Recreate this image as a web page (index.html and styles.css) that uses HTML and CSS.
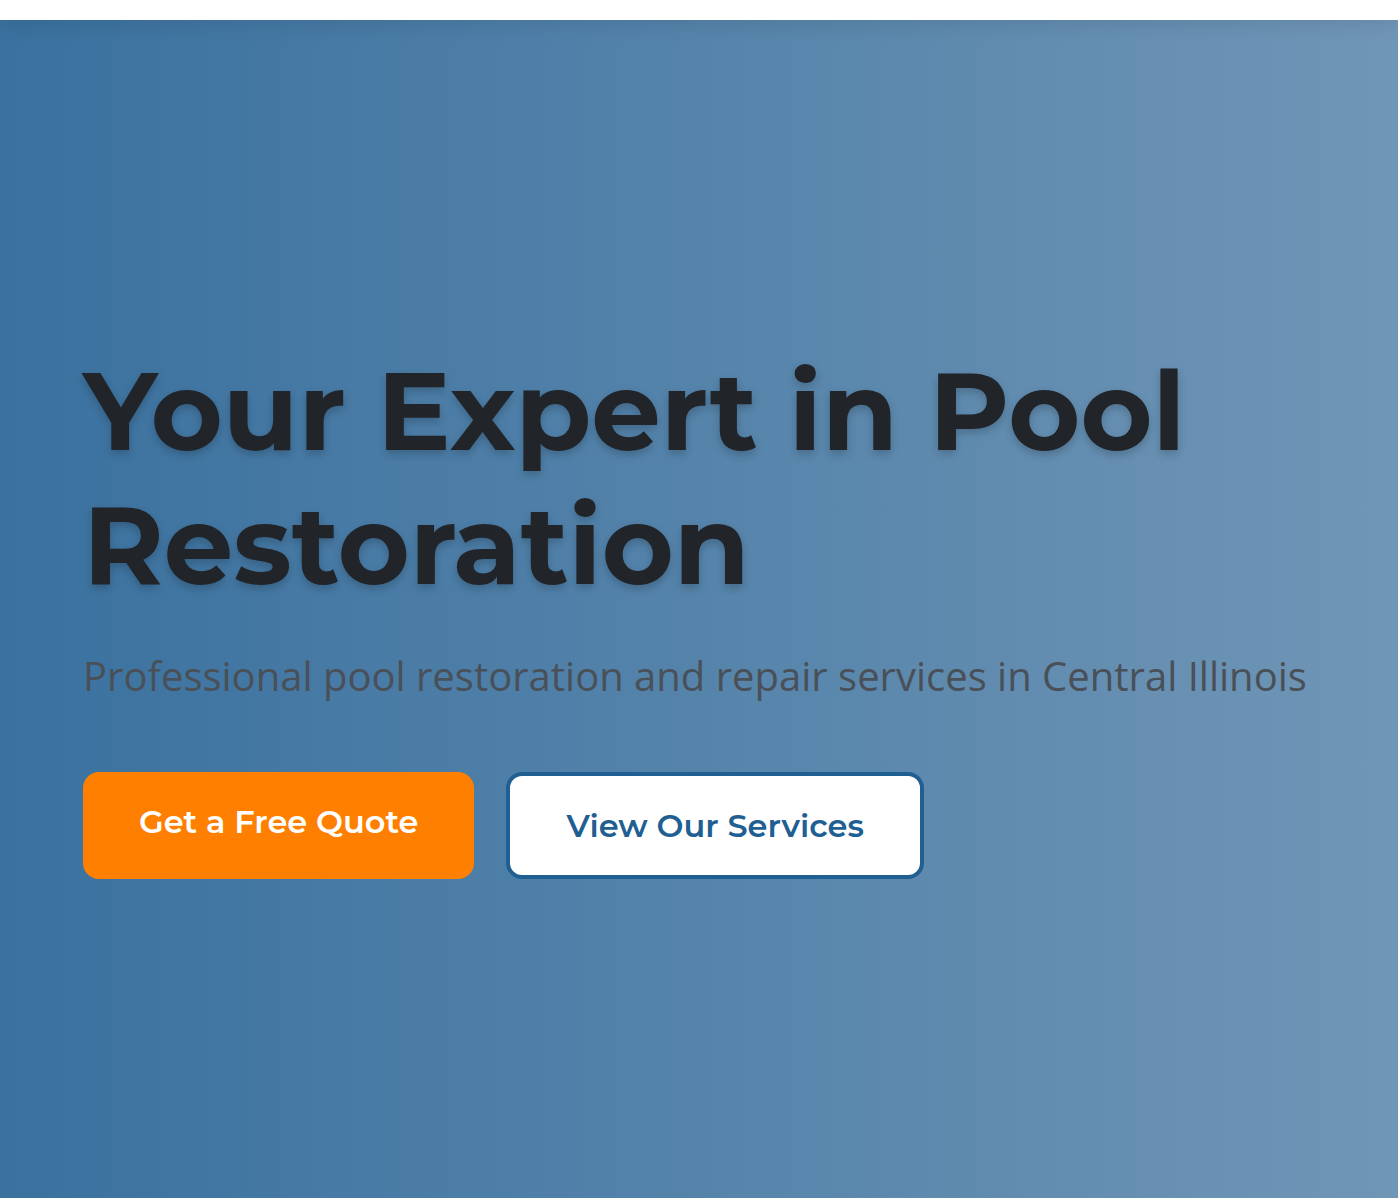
FILE: index.html
```html
<!DOCTYPE html>
<html lang="en">
<head>
<meta charset="utf-8">
<meta name="viewport" content="width=device-width, initial-scale=1">
<title>Pool Restoration</title>
<link rel="stylesheet" href="styles.css">
</head>
<body>
<header class="site-header"></header>
<main class="hero">
  <div class="hero-content">
    <h1 class="hero-title">Your Expert in Pool Restoration</h1>
    <p class="hero-lead">Professional pool restoration and repair services in Central Illinois</p>
    <div class="hero-actions">
      <a class="btn btn-primary" href="#quote">Get a Free Quote</a>
      <a class="btn btn-outline" href="#services">View Our Services</a>
    </div>
  </div>
</main>
</body>
</html>
```
FILE: styles.css
```css
* {
  box-sizing: border-box;
}

body {
  display: flex;
  flex-direction: column;
  min-height: 100vh;
  margin: 0;
  font-family: "Open Sans", "Noto Sans", sans-serif;
}

.site-header {
  position: relative;
  height: 20px;
  background: #fff;
  box-shadow: 0 4px 20px rgba(0, 0, 0, 0.1);
}

.hero {
  display: flex;
  flex: 1;
  align-items: center;
  padding: 36px 83px 32px;
  background: linear-gradient(90deg, #3a719f 0%, #7096b6 100%);
}

.hero-content {
  width: 100%;
}

.hero-title {
  margin: 0 0 32px;
  color: #212529;
  font-family: Montserrat, "Open Sans", sans-serif;
  font-size: 110px;
  font-weight: 700;
  line-height: 134px;
  text-shadow: 0 4px 8px rgba(0, 0, 0, 0.2);
}

.hero-lead {
  margin: 0 0 64px;
  color: #495057;
  font-size: 40px;
  line-height: 64px;
}

.hero-actions {
  display: flex;
  flex-wrap: wrap;
  gap: 32px;
}

.btn {
  padding: 24px 56px 32px;
  border-radius: 16px;
  font-family: Montserrat, "Open Sans", sans-serif;
  font-size: 32px;
  font-weight: 600;
  line-height: 51px;
  text-decoration: none;
}

.btn-primary {
  background: #ff8000;
  color: #fff;
}

.btn-outline {
  padding: 24px 56px;
  border: 4px solid #1f5f92;
  background: #fff;
  color: #1f5f92;
}
```
